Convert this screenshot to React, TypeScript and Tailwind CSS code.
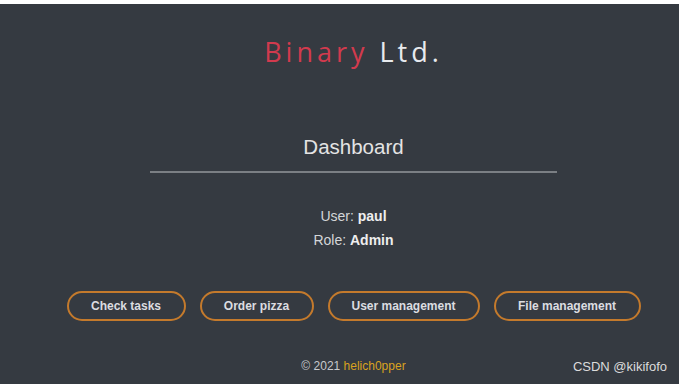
const buttons = ['Check tasks', 'Order pizza', 'User management', 'File management'];
const widths = ['w-[119px]', 'w-[114px]', 'w-[152px]', 'w-[147px]'];

export default function App() {
  return (
    <div className="w-[682px] h-[384px] bg-white pt-[4px] pr-[3px] overflow-hidden">
      <div
        className="relative h-[380px] bg-[#353a41] pl-[28px] flex flex-col items-center"
        style={{ fontFamily: '"Liberation Sans", Arial, sans-serif' }}
      >
        <h1
          className="mt-[31px] text-[27px] leading-[34px] tracking-[4px]"
          style={{ fontFamily: '"Open Sans", "DejaVu Sans", sans-serif' }}
        >
          <span className="text-[#d23a4e]">Binary</span>{' '}
          <span className="text-[#e8eaee]">Ltd.</span>
        </h1>

        <h2 className="mt-[66px] text-[20.5px] leading-[24px] text-[#e4e4e4]">Dashboard</h2>
        <div className="mt-[12px] w-[407px] h-[2px] bg-[#7b7f84]" />

        <div className="mt-[35px] flex flex-col items-center gap-[8px] text-[14px] leading-[16px] text-[#d4d6d8]">
          <div>
            User: <span className="font-bold text-[#eeeeee]">paul</span>
          </div>
          <div>
            Role: <span className="font-bold text-[#eeeeee]">Admin</span>
          </div>
        </div>

        <div className="mt-[43px] flex gap-[14px]">
          {buttons.map((b, i) => (
            <button
              key={b}
              className={`h-[30px] rounded-full border-2 border-[#c47a2c] text-[12px] font-bold text-[#dcdde0] ${widths[i]}`}
            >
              {b}
            </button>
          ))}
        </div>

        <div className="mt-[38px] text-[12px] leading-[14px] text-[#c8c9cc]">
          © 2021 <span className="text-[#d9a21f]">helich0pper</span>
        </div>

        <div className="absolute right-[12px] bottom-[8px] text-[13px] text-[#dcdcdc]">
          CSDN @kikifofo
        </div>
      </div>
    </div>
  );
}
